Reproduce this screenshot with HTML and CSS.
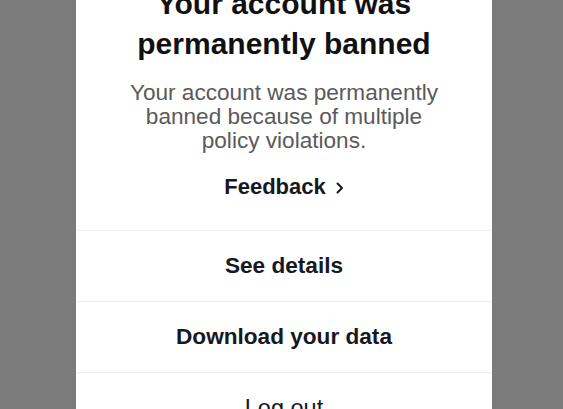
FILE: index.html
```html
<!DOCTYPE html>
<html>
<head>
<meta charset="utf-8">
<link rel="stylesheet" href="styles.css">
</head>
<body>
<div class="page">
  <div class="card">
    <div class="top">
      <h1 class="title">Your account was<br>permanently banned</h1>
      <p class="desc">Your account was permanently<br>banned because of multiple<br>policy violations.</p>
      <div class="feedback">
        <span>Feedback</span>
        <svg class="chev" width="8" height="12" viewBox="0 0 8 12"><path d="M1.5 1.5 L6 6 L1.5 10.5" fill="none" stroke="#161823" stroke-width="2" stroke-linecap="round" stroke-linejoin="round"/></svg>
      </div>
    </div>
    <div class="row bold">See details</div>
    <div class="row bold">Download your data</div>
    <div class="row light">Log out</div>
  </div>
</div>
</body>
</html>
```
FILE: styles.css
```css
html, body {
  margin: 0;
  padding: 0;
  background: #7b7b7b;
  overflow: hidden;
}
.page {
  width: 563px;
  height: 409px;
  overflow: hidden;
  font-family: "Liberation Sans", Arial, sans-serif;
}
.card {
  margin-left: 76px;
  width: 416px;
  margin-top: -16px;
  background: #ffffff;
  min-height: 500px;
}
.top {
  display: flex;
  flex-direction: column;
  align-items: center;
  padding-bottom: 30px;
}
.title {
  margin: 0;
  font-size: 30px;
  line-height: 40px;
  font-weight: 700;
  color: #111111;
  text-align: center;
}
.desc {
  margin: 17px 0 0;
  font-size: 22.6px;
  line-height: 24px;
  color: #5a5a5a;
  text-align: center;
}
.feedback {
  margin-top: 21px;
  display: flex;
  align-items: center;
  gap: 10px;
  font-size: 22px;
  line-height: 26px;
  font-weight: 700;
  color: #161823;
}
.chev {
  display: block;
  margin-top: 1px;
}
.row {
  border-top: 1px solid #ececec;
  height: 70px;
  display: flex;
  align-items: center;
  justify-content: center;
  font-size: 22.6px;
  color: #161823;
}
.bold {
  font-weight: 700;
}
.light {
  font-weight: 400;
  font-size: 23.5px;
}
```
